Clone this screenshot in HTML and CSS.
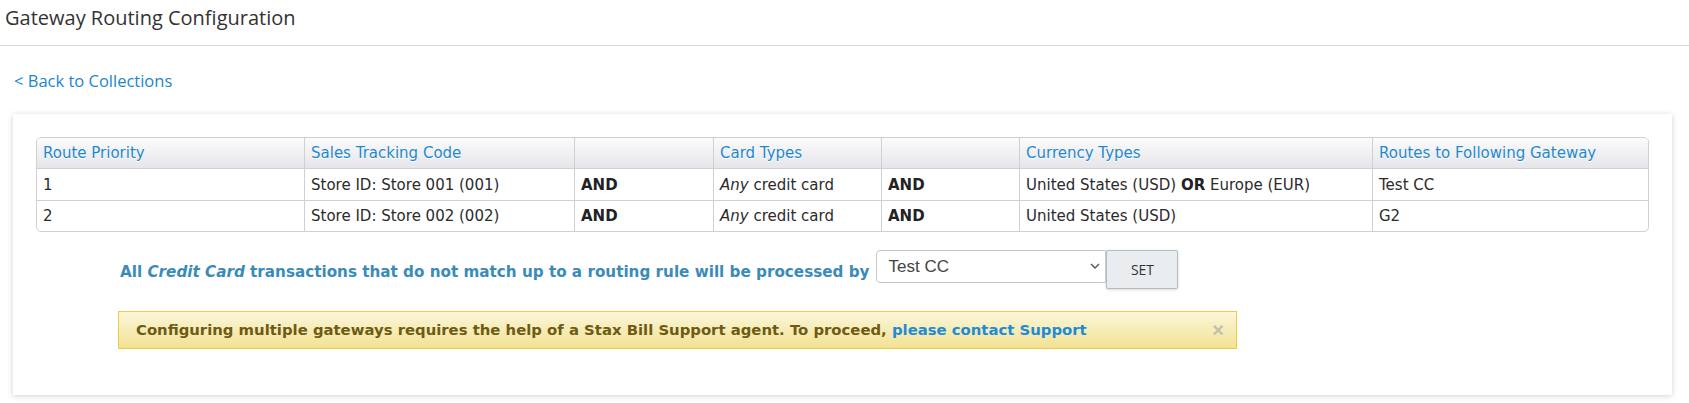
FILE: index.html
```html
<!DOCTYPE html>
<html lang="en">
<head>
  <meta charset="UTF-8" />
  <meta name="viewport" content="width=device-width, initial-scale=1.0"/>
  <title>Gateway Routing Configuration</title>
  <link rel="stylesheet" href="styles.css">
</head>
<body>
  <div class="page-header">
    <h1>Gateway Routing Configuration</h1>
  </div>

  <a class="back-link" href="#">&lt; Back to Collections</a>

  <div class="card">
    <table class="routes">
      <colgroup>
        <col class="c-priority">
        <col class="c-code">
        <col class="c-and">
        <col class="c-cards">
        <col class="c-and2">
        <col class="c-currency">
        <col class="c-gateway">
      </colgroup>
      <thead>
        <tr>
          <th>Route Priority</th>
          <th>Sales Tracking Code</th>
          <th></th>
          <th>Card Types</th>
          <th></th>
          <th>Currency Types</th>
          <th>Routes to Following Gateway</th>
        </tr>
      </thead>
      <tbody>
        <tr>
          <td>1</td>
          <td>Store ID: Store 001 (001)</td>
          <td><b>AND</b></td>
          <td><i>Any</i> credit card</td>
          <td><b>AND</b></td>
          <td>United States (USD) <b>OR</b> Europe (EUR)</td>
          <td>Test CC</td>
        </tr>
        <tr>
          <td>2</td>
          <td>Store ID: Store 002 (002)</td>
          <td><b>AND</b></td>
          <td><i>Any</i> credit card</td>
          <td><b>AND</b></td>
          <td>United States (USD)</td>
          <td>G2</td>
        </tr>
      </tbody>
    </table>

    <div class="default-row">
      <span class="default-label">All <i>Credit Card</i> transactions that do not match up to a routing rule will be processed by</span>
      <div class="select-wrap">
        <select id="defaultGateway">
          <option>Test CC</option>
          <option>G2</option>
        </select>
        <svg class="chevron" width="10" height="6" viewBox="0 0 10 6">
          <path d="M1 1 L5 5 L9 1" fill="none" stroke="#555" stroke-width="1.4"/>
        </svg>
      </div>
      <button id="btnSet">SET</button>
    </div>

    <div class="alert">
      <span>Configuring multiple gateways requires the help of a Stax Bill Support agent. To proceed, <a href="#">please contact Support</a></span>
      <span class="close">&times;</span>
    </div>
  </div>
</body>
</html>
```

FILE: styles.css
```css
:root {
  --link-color: #1a86d0;
  --text-color: #333;
  --border-color: #cfcfd4;
}

body {
  margin: 0;
  padding: 0;
  background-color: #fff;
  color: var(--text-color);
  font-family: "Open Sans", sans-serif;
}

.page-header {
  padding: 5px 5px 14px;
  border-bottom: 1px solid #d3dada;
}

.page-header h1 {
  margin: 0;
  font-size: 20px;
  font-weight: normal;
  line-height: 26px;
  color: #333;
}

.back-link {
  display: inline-block;
  margin: 25px 0 0 14px;
  font-size: 16.5px;
  line-height: 20px;
  color: var(--link-color);
  text-decoration: none;
}

.card {
  margin: 22px 17px 8px 13px;
  padding: 23px 23px 46px;
  background-color: #fff;
  box-shadow: 0 1px 6px rgba(0, 0, 0, 0.18);
}

.routes {
  width: 100%;
  table-layout: fixed;
  border-collapse: separate;
  border-spacing: 0;
  border: 1px solid var(--border-color);
  border-radius: 5px;
  overflow: hidden;
  font-family: "DejaVu Sans", Verdana, sans-serif;
  font-size: 15px;
}

.c-priority { width: 268px; }
.c-code { width: 270px; }
.c-and { width: 139px; }
.c-cards { width: 168px; }
.c-and2 { width: 138px; }
.c-currency { width: 353px; }

.routes th,
.routes td {
  padding: 0 6px;
  text-align: left;
  white-space: nowrap;
  border-right: 1px solid var(--border-color);
  border-bottom: 1px solid var(--border-color);
  box-sizing: border-box;
}

.routes th:last-child,
.routes td:last-child {
  border-right: none;
}

.routes tbody tr:last-child td {
  height: 30px;
  border-bottom: none;
}

.routes th {
  height: 31px;
  font-weight: normal;
  color: #1e88cf;
  text-shadow: 0 1px 0 #fff;
  background: linear-gradient(#fbfbfc, #e6e6ea);
}

.routes td {
  height: 32px;
  color: #2b2b2b;
}

.routes td b {
  color: #222;
}

.default-row {
  display: flex;
  align-items: flex-start;
  margin-top: 18px;
  padding-left: 84px;
}

.default-label {
  margin-top: 12px;
  margin-right: 7px;
  font-family: "DejaVu Sans", Verdana, sans-serif;
  font-size: 15.2px;
  font-weight: bold;
  line-height: 20px;
  color: #3a8bba;
}

.select-wrap {
  position: relative;
}

.select-wrap select {
  appearance: none;
  -webkit-appearance: none;
  width: 230px;
  height: 33px;
  padding: 0 24px 0 11px;
  font-family: "Liberation Sans", Arial, sans-serif;
  font-size: 17px;
  color: #444;
  background-color: #fff;
  border: 1px solid #c8c8cc;
  border-radius: 4px 0 0 4px;
}

.chevron {
  position: absolute;
  top: 13px;
  right: 6px;
  pointer-events: none;
}

#btnSet {
  width: 72px;
  height: 39px;
  padding: 0;
  font-family: "Open Sans", sans-serif;
  font-size: 14px;
  color: #333;
  background-color: #e9edf0;
  border: 1px solid #b4bcc3;
  border-radius: 2px;
  box-shadow: 0 1px 3px rgba(0, 0, 0, 0.15);
  cursor: pointer;
}

.alert {
  display: flex;
  justify-content: space-between;
  align-items: center;
  width: 1119px;
  box-sizing: border-box;
  margin: 22px 0 0 82px;
  padding: 8px 12px 8px 17px;
  font-family: "DejaVu Sans", Verdana, sans-serif;
  font-size: 14.85px;
  font-weight: bold;
  line-height: 20px;
  color: #6e5b12;
  background: linear-gradient(#fbf6da, #f2e293);
  border: 1px solid #e6cf45;
}

.alert a {
  color: #1e8bd6;
  text-decoration: none;
}

.alert .close {
  font-family: "Liberation Sans", Arial, sans-serif;
  font-size: 20px;
  color: #c2bfae;
}
```
